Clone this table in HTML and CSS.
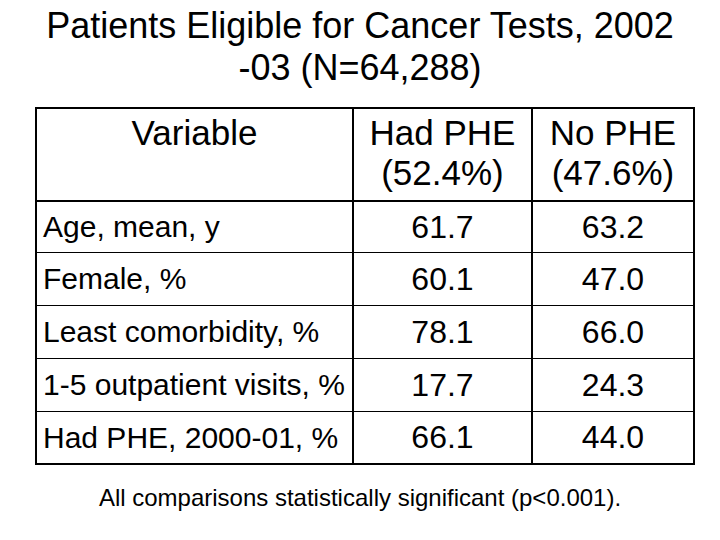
FILE: index.html
```html
<!DOCTYPE html>
<html>
<head>
<meta charset="utf-8">
<link rel="stylesheet" href="styles.css">
</head>
<body>
<div class="slide">
  <h1 class="title">Patients Eligible for Cancer Tests, 2002<br>-03 (N=64,288)</h1>
  <div class="table">
    <div class="cell head var">Variable</div>
    <div class="cell head">Had PHE<br>(52.4%)</div>
    <div class="cell head last">No PHE<br>(47.6%)</div>

    <div class="cell label">Age, mean, y</div>
    <div class="cell num">61.7</div>
    <div class="cell num last">63.2</div>

    <div class="cell label">Female, %</div>
    <div class="cell num">60.1</div>
    <div class="cell num last">47.0</div>

    <div class="cell label">Least comorbidity, %</div>
    <div class="cell num">78.1</div>
    <div class="cell num last">66.0</div>

    <div class="cell label">1-5 outpatient visits, %</div>
    <div class="cell num">17.7</div>
    <div class="cell num last">24.3</div>

    <div class="cell label bottom">Had PHE, 2000-01, %</div>
    <div class="cell num bottom">66.1</div>
    <div class="cell num last bottom">44.0</div>
  </div>
  <p class="note">All comparisons statistically significant (p&lt;0.001).</p>
</div>
</body>
</html>
```

FILE: styles.css
```css
html, body {
  margin: 0;
  padding: 0;
  background: #ffffff;
}

.slide {
  width: 720px;
  height: 540px;
  font-family: "Liberation Sans", Arial, sans-serif;
  color: #000000;
  overflow: hidden;
}

.title {
  margin: 0;
  padding-top: 5px;
  font-size: 36px;
  line-height: 42px;
  font-weight: normal;
  text-align: center;
}

.table {
  margin: 18px 0 0 35px;
  width: 656px;
  border: 2px solid #000;
  display: grid;
  grid-template-columns: 317px 179px 160px;
  grid-template-rows: 93px 51px 53px 53px 53px 51px;
}

.cell {
  border-right: 2px solid #000;
  border-bottom: 1px solid #000;
  display: flex;
  align-items: center;
}

.cell.last {
  border-right: none;
}

.cell.bottom {
  border-bottom: none;
}

.head {
  border-bottom: 2px solid #000;
  align-items: flex-start;
  justify-content: center;
  text-align: center;
  font-size: 35px;
  line-height: 40px;
  padding-top: 4px;
}

.label {
  font-size: 30px;
  padding-left: 6px;
}

.num {
  font-size: 32px;
  justify-content: center;
}

.note {
  margin: 19px 0 0 0;
  font-size: 24px;
  line-height: 28px;
  text-align: center;
}
```
